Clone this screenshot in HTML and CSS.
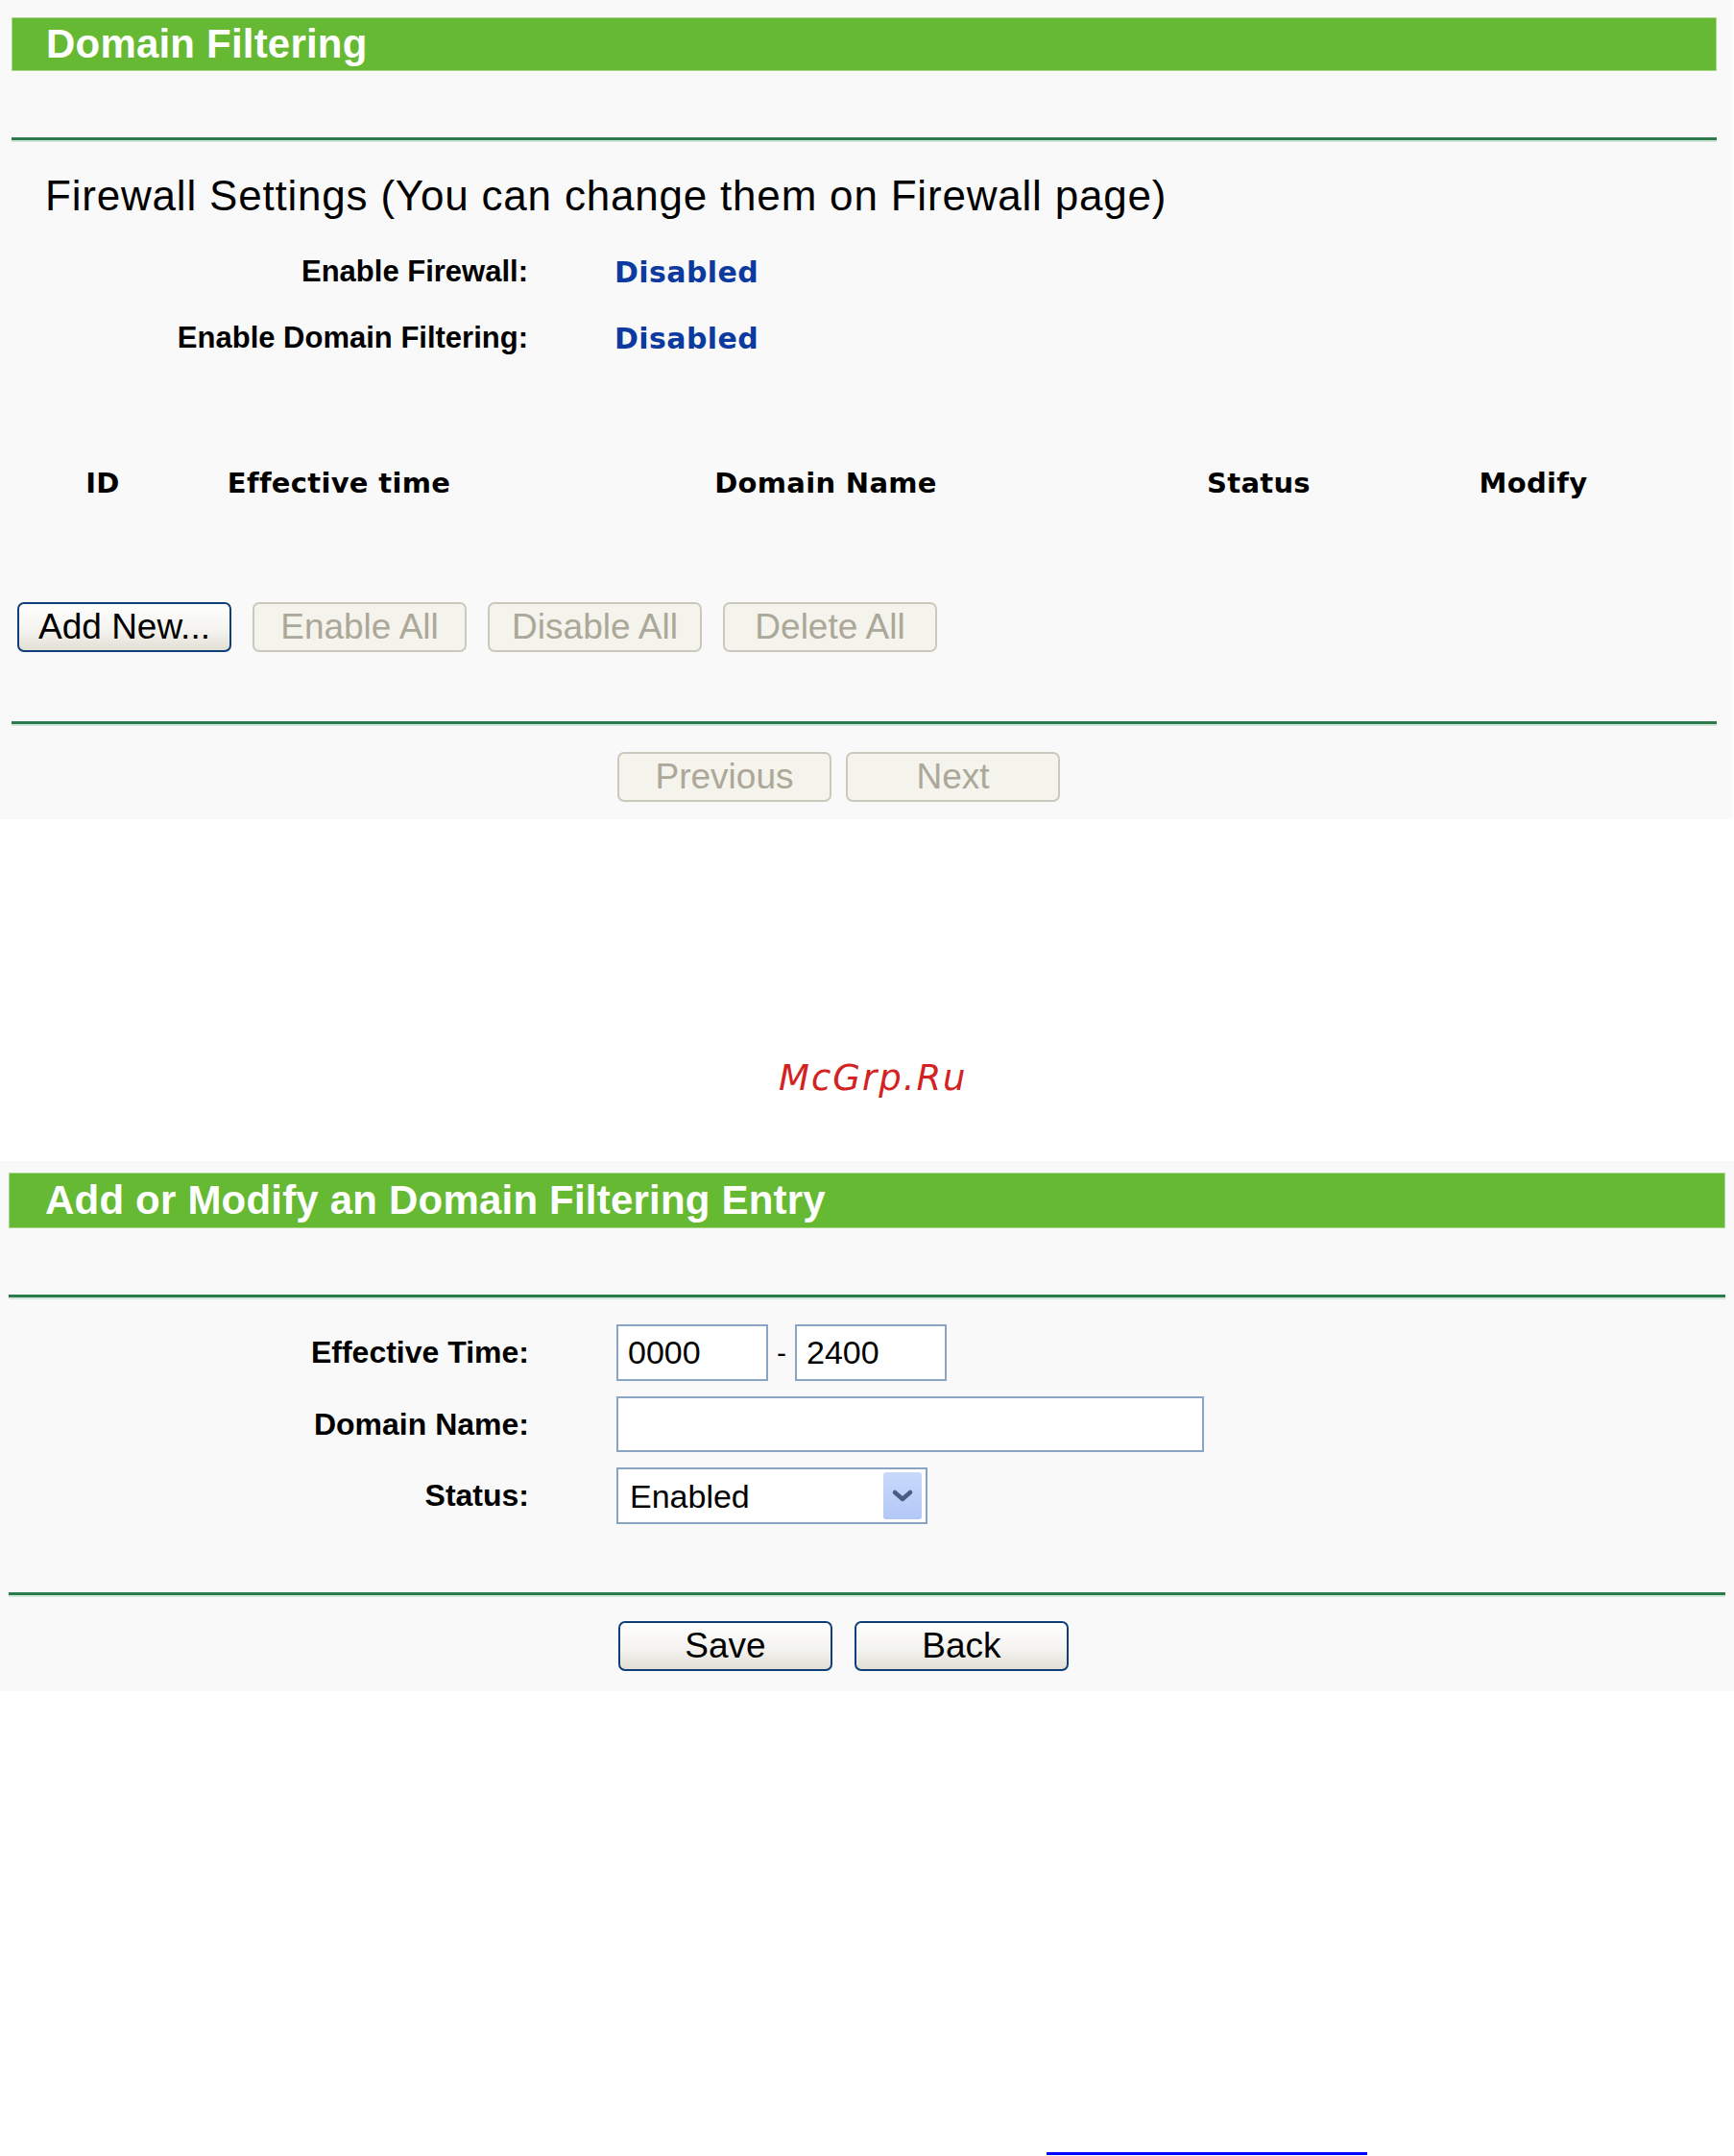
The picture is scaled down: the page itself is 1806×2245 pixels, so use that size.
FILE: index.html
```html
<!DOCTYPE html>
<html lang="en">
<head>
  <meta charset="UTF-8">
  <title>Domain Filtering</title>
  <link rel="stylesheet" href="styles.css">
</head>
<body>
  <div class="panel panel-list">
    <div class="title-bar">Domain Filtering</div>
    <div class="rule rule-top"></div>

    <div class="subtitle">Firewall Settings (You can change them on Firewall page)</div>
    <div class="info-row info-first">
      <span class="label">Enable Firewall:</span>
      <span class="state">Disabled</span>
    </div>
    <div class="info-row">
      <span class="label">Enable Domain Filtering:</span>
      <span class="state">Disabled</span>
    </div>

    <div class="list-head">
      <span>ID</span>
      <span>Effective time</span>
      <span>Domain Name</span>
      <span>Status</span>
      <span>Modify</span>
    </div>

    <div class="actions">
      <button class="btn">Add New...</button>
      <button class="btn" disabled>Enable All</button>
      <button class="btn" disabled>Disable All</button>
      <button class="btn" disabled>Delete All</button>
    </div>

    <div class="rule rule-bottom"></div>
    <div class="pager">
      <button class="btn" disabled>Previous</button>
      <button class="btn" disabled>Next</button>
    </div>
  </div>

  <div class="watermark">McGrp.Ru</div>

  <div class="panel panel-entry">
    <div class="title-bar">Add or Modify an Domain Filtering Entry</div>
    <div class="rule rule-top"></div>

    <div class="form">
      <div class="form-row">
        <label class="label">Effective Time:</label>
        <div class="field">
          <input type="text" class="input input-time" value="0000">
          <span class="dash">-</span>
          <input type="text" class="input input-time" value="2400">
        </div>
      </div>
      <div class="form-row">
        <label class="label">Domain Name:</label>
        <div class="field">
          <input type="text" class="input input-domain" value="">
        </div>
      </div>
      <div class="form-row">
        <label class="label">Status:</label>
        <div class="field">
          <div class="select-wrap">
            <select class="select">
              <option>Enabled</option>
              <option>Disabled</option>
            </select>
            <span class="select-arrow">
              <svg width="22" height="14" viewBox="0 0 22 14">
                <path d="M3 3 L11 10 L19 3" fill="none" stroke="#4a5d80" stroke-width="4.5" stroke-linecap="round" stroke-linejoin="round"/>
              </svg>
            </span>
          </div>
        </div>
      </div>
    </div>

    <div class="rule rule-bottom2"></div>
    <div class="pager pager-entry">
      <button class="btn">Save</button>
      <button class="btn">Back</button>
    </div>
  </div>

  <div class="page-link"></div>
</body>
</html>
```

FILE: styles.css
```css
body {
  margin: 0;
  background: #fff;
  font-family: "Liberation Sans", Arial, sans-serif;
  color: #000;
}
.panel {
  background: #f9f9f9;
  box-sizing: border-box;
}
.panel-list {
  width: 1805px;
  padding: 18px 17px 18px 12px;
}
.panel-entry {
  width: 1806px;
  margin-top: 62px;
  padding: 12px 9px 21px 9px;
}
.title-bar {
  height: 56px;
  display: flex;
  align-items: center;
  padding-left: 35px;
  background: #66b933;
  border: 1px solid #a9d78d;
  box-sizing: border-box;
  color: #fff;
  font-size: 42px;
  font-weight: bold;
  letter-spacing: 0.2px;
}
.panel-entry .title-bar {
  height: 58px;
  padding-left: 37px;
}
.rule {
  height: 3px;
  background: #2b7c4d;
  box-shadow: 0 2px 0 #d3e6d9;
}
.rule-top {
  margin-top: 69px;
}
.subtitle {
  margin: 34px 0 0 35px;
  font-size: 44px;
  line-height: 48px;
  letter-spacing: 0.8px;
}
.info-row {
  display: grid;
  grid-template-columns: 538px auto;
  column-gap: 90px;
  align-items: center;
  height: 48px;
  margin-top: 21px;
}
.info-first {
  margin-top: 31px;
}
.label {
  text-align: right;
  font-size: 31px;
  font-weight: bold;
}
.state {
  font-family: "DejaVu Sans", Verdana, sans-serif;
  font-size: 30px;
  font-weight: bold;
  color: #0c3a9f;
  letter-spacing: 0.4px;
}
.list-head {
  display: grid;
  grid-template-columns: 190px 302px 712px 190px 382px;
  margin-top: 103px;
  height: 48px;
  align-items: center;
  text-align: center;
  font-family: "DejaVu Sans", Verdana, sans-serif;
  font-size: 29px;
  font-weight: bold;
  letter-spacing: 0.3px;
}
.actions {
  display: flex;
  gap: 22px;
  margin: 100px 0 0 6px;
}
.btn {
  width: 223px;
  height: 52px;
  padding: 0;
  border: 2px solid #0f3f78;
  border-radius: 7px;
  background: linear-gradient(#ffffff, #f3f2ee 60%, #e2ded3);
  font-family: "Liberation Sans", Arial, sans-serif;
  font-size: 37px;
  color: #000;
}
.btn:disabled {
  border-color: #cbc9bc;
  background: #f4f3ec;
  color: #aca899;
}
.rule-bottom {
  margin-top: 72px;
}
.pager {
  display: flex;
  gap: 15px;
  margin: 29px 0 0 631px;
}
.watermark {
  margin-top: 246px;
  height: 48px;
  line-height: 48px;
  padding-left: 811px;
  font-family: "DejaVu Sans", Verdana, sans-serif;
  font-style: italic;
  font-size: 37px;
  letter-spacing: 2px;
  color: #d32222;
}
.form {
  display: flex;
  flex-direction: column;
  gap: 16px;
  margin-top: 28px;
}
.form-row {
  display: grid;
  grid-template-columns: 542px auto;
  column-gap: 91px;
  align-items: center;
}
.form-row .label {
  font-size: 32px;
}
.field {
  display: flex;
  align-items: center;
}
.input {
  height: 59px;
  box-sizing: border-box;
  border: 2px solid #8aa5c4;
  background: #fff;
  padding: 0 10px;
  font-family: "Liberation Sans", Arial, sans-serif;
  font-size: 34px;
  color: #000;
  outline: none;
}
.input-time {
  width: 158px;
}
.input-domain {
  width: 612px;
  height: 58px;
}
.dash {
  width: 28px;
  text-align: center;
  font-size: 30px;
}
.select-wrap {
  position: relative;
  width: 324px;
  height: 59px;
}
.select {
  appearance: none;
  -webkit-appearance: none;
  width: 100%;
  height: 100%;
  box-sizing: border-box;
  border: 2px solid #8aa5c4;
  border-radius: 0;
  background: #fff;
  padding: 0 0 0 12px;
  font-family: "Liberation Sans", Arial, sans-serif;
  font-size: 34px;
  color: #000;
  outline: none;
}
.select-arrow {
  position: absolute;
  top: 5px;
  right: 6px;
  width: 40px;
  height: 49px;
  display: flex;
  align-items: center;
  justify-content: center;
  border-radius: 3px;
  background: linear-gradient(#c9d9fc, #b3c8f7);
}
.rule-bottom2 {
  margin-top: 71px;
}
.pager-entry {
  gap: 23px;
  margin: 27px 0 0 635px;
}
.page-link {
  width: 334px;
  height: 3px;
  margin: 480px 0 0 1090px;
  background: #0000ff;
}
```
